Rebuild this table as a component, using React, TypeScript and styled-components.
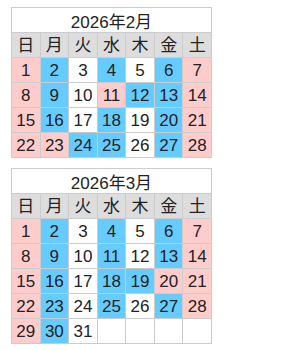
import React from "react";
import styled, { createGlobalStyle } from "styled-components";

const Global = createGlobalStyle`
  html, body { margin: 0; padding: 0; background: #fff; }
  body { font-family: "Liberation Sans", Arial, "Noto Sans CJK JP", sans-serif; color: #222; }
`;

const Page = styled.div`
  display: flex;
  flex-direction: column;
  gap: 10px;
  padding: 7px 0 0 11px;
`;

const Calendar = styled.div`
  display: grid;
  grid-template-columns: repeat(7, 1fr);
  gap: 1px;
  width: 201px;
  box-sizing: border-box;
  border: 1px solid #cccccc;
  background: #cccccc;
`;

const Title = styled.div`
  grid-column: 1 / -1;
  height: 24px;
  background: #ffffff;
  display: flex;
  align-items: center;
  justify-content: center;
  font-size: 17px;
`;

type Kind = "h" | "p" | "b" | "w";

const colors: Record<Kind, string> = {
  h: "#dddddd",
  p: "#ffcccc",
  b: "#66ccff",
  w: "#ffffff",
};

const Cell = styled.div<{ $kind: Kind }>`
  height: 24px;
  background: ${(p) => colors[p.$kind]};
  display: flex;
  align-items: center;
  justify-content: center;
  font-size: 17px;
  line-height: 1;
`;

const weekdays = ["日", "月", "火", "水", "木", "金", "土"];

type Month = { title: string; days: [string, Kind][] };

const parse = (pattern: string, count: number): [string, Kind][] => {
  const out: [string, Kind][] = [];
  const kinds = pattern.replace(/\s/g, "").split("") as Kind[];
  kinds.forEach((k, i) => {
    out.push([i < count ? String(i + 1) : "", k]);
  });
  return out;
};

const months: Month[] = [
  {
    title: "2026年2月",
    days: parse("pbwbwbp pbwpbbp pbwbwbp ppbbwbp", 28),
  },
  {
    title: "2026年3月",
    days: parse("pbwbwbp pbwbwbp pbwbbpp pbwbwbp pbwwwww", 31),
  },
];

export default function App() {
  return (
    <>
      <Global />
      <Page>
        {months.map((m) => (
          <Calendar key={m.title}>
            <Title>{m.title}</Title>
            {weekdays.map((d) => (
              <Cell key={d} $kind="h">
                {d}
              </Cell>
            ))}
            {m.days.map(([n, k], i) => (
              <Cell key={i} $kind={k}>
                {n}
              </Cell>
            ))}
          </Calendar>
        ))}
      </Page>
    </>
  );
}
